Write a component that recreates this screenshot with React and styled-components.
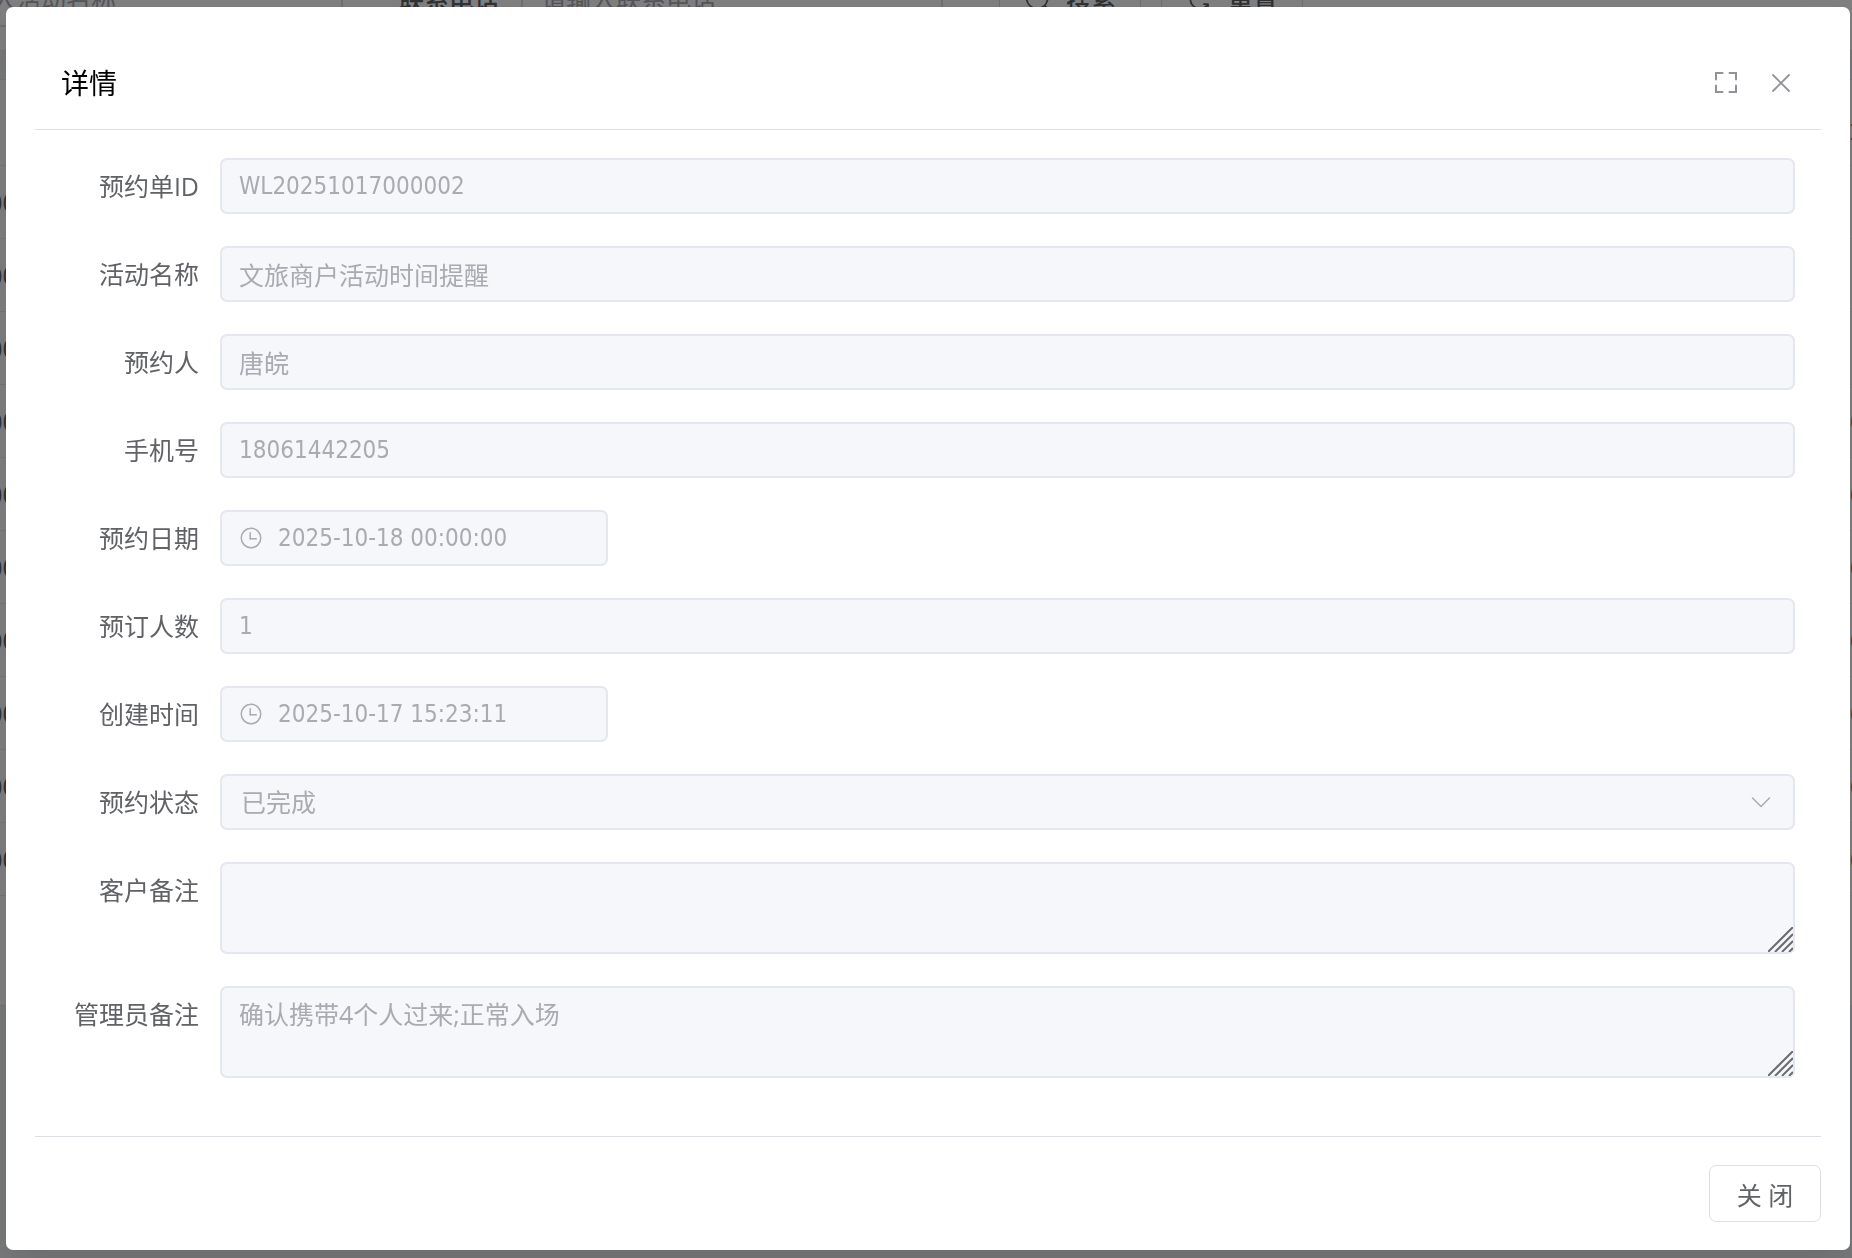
import React from "react";
import styled, { createGlobalStyle } from "styled-components";

const cjk = `"Noto Sans CJK SC", sans-serif`;

const GlobalStyle = createGlobalStyle`
    * {
        box-sizing: border-box;
    }
    body {
        margin: 0;
        font-family: "Open Sans", ${cjk};
        font-size: 25px;
        color: #606266;
        background: #f0f2f5;
    }
    button, input, select, textarea {
        font: inherit;
        margin: 0;
    }
`;

/* list page behind the dialog */

const Page = styled.div`
    height: 100vh;
    overflow: hidden;
`;

const Scrolled = styled.div`
    margin: -53px -160px 0 -103px;
    display: flex;
    flex-direction: column;
    gap: 28px;
`;

const Panel = styled.div`
    background: white;
    border: 1px solid #e4e7ed;
    padding: 23px;
`;

const SearchForm = styled(Panel)`
    display: flex;
    align-items: center;
    gap: 56px;
`;

const SearchItem = styled.label`
    display: flex;
    align-items: center;
    gap: 22px;
    font-weight: 500;
`;

const SearchInput = styled.input`
    width: 422px;
    height: 56px;
    padding: 0 18px;
    border: 2px solid #dcdfe6;
    border-radius: 6px;
    background: white;
    font-weight: 400;
    &::placeholder {
        color: #a8abb2;
        opacity: 1;
    }
`;

const Buttons = styled.div`
    display: flex;
    gap: 20px;
`;

const SearchButton = styled.button`
    width: 142px;
    height: 56px;
    display: flex;
    align-items: center;
    justify-content: center;
    gap: 14px;
    padding: 0;
    border: 1px solid #dcdfe6;
    border-radius: 6px;
    background: white;
    color: #606266;
    font-weight: 500;
`;

const ListPanel = styled(Panel)`
    padding: 12px 23px 109px;
`;

const List = styled.table`
    width: 100%;
    table-layout: fixed;
    border-collapse: collapse;
    color: #606266;
    th, td {
        height: 73px;
        padding: 0 0 0 10px;
        border-bottom: 1px solid #ebeef5;
        text-align: left;
        white-space: nowrap;
        line-height: 32px;
    }
    th:last-child, td:last-child {
        width: 138px;
        padding: 0;
    }
`;

/* dialog */

const Overlay = styled.div`
    position: fixed;
    inset: 0;
    overflow: auto;
    padding: 7px 2px 8px 6px;
    background: rgba(0, 0, 0, 0.5);
`;

const Dialog = styled.div`
    min-height: 100%;
    display: flex;
    flex-direction: column;
    padding: 28px 29px;
    border-radius: 7px;
    background: white;
    box-shadow: 0 21px 56px 7px rgba(0, 0, 0, 0.04), 0 14px 35px rgba(0, 0, 0, 0.08);
`;

const Header = styled.header`
    display: flex;
    align-items: center;
    justify-content: space-between;
    height: 95px;
    padding: 2px 26px 0;
    border-bottom: 1px solid #dcdfe6;
`;

const Title = styled.h1`
    margin: 0;
    font-size: 28px;
    font-weight: 400;
    line-height: 40px;
    color: black;
`;

const Tools = styled.div`
    display: flex;
    gap: 27px;
`;

const IconButton = styled.button`
    width: 28px;
    height: 28px;
    padding: 0;
    border: 0;
    background: none;
    color: #909399;
    svg {
        display: block;
    }
`;

const Form = styled.form`
    flex: 1;
    display: flex;
    flex-direction: column;
    gap: 32px;
    padding: 28px 26px 0 0;
`;

const Row = styled.div`
    display: flex;
    align-items: flex-start;
`;

const Label = styled.label`
    width: 185px;
    padding-right: 21px;
    text-align: right;
    line-height: 56px;
`;

const Control = styled.div`
    position: relative;
    flex: ${props => (props.$short ? "0 0 388px" : "1")};
    display: flex;
`;

const controlStyle = `
    width: 100%;
    border: 2px solid #e4e7ed;
    border-radius: 7px;
    background: #f5f7fa;
    color: #a8abb2;
    -webkit-text-fill-color: #a8abb2;
    opacity: 1;
    outline: none;
`;

const Input = styled.input`
    ${controlStyle}
    height: 56px;
    padding: 0 17px 0 ${props => (props.$icon ? "56px" : "17px")};
    ${props => props.$latin && `
        font-family: "DejaVu Sans Condensed", "Noto Sans", ${cjk};
        font-size: 24px;
    `}
`;

const Select = styled.select`
    ${controlStyle}
    appearance: none;
    height: 56px;
    padding: 0 19px;
`;

const Textarea = styled.textarea`
    ${controlStyle}
    display: block;
    height: 92px;
    padding: 8px 17px;
    line-height: 36px;
    resize: none;
`;

const Prefix = styled.span`
    position: absolute;
    top: 16px;
    left: 19px;
    color: #a8abb2;
    svg {
        display: block;
    }
`;

const Arrow = styled(Prefix)`
    left: auto;
    right: 22px;
`;

const Grip = styled(Prefix)`
    top: auto;
    left: auto;
    right: 2px;
    bottom: 2px;
    color: #6b6c70;
`;

const Footer = styled.footer`
    display: flex;
    justify-content: flex-end;
    padding-top: 28px;
    border-top: 1px solid #dcdfe6;
`;

const CloseButton = styled.button`
    width: 112px;
    height: 57px;
    padding: 0;
    border: 1px solid #dcdfe6;
    border-radius: 7px;
    background: white;
    color: #606266;
`;

const ClockIcon = () => (
    <svg width="24" height="24" viewBox="0 0 1024 1024" fill="currentColor">
        <path d="M512 896a384 384 0 1 0 0-768 384 384 0 0 0 0 768m0 64a448 448 0 1 1 0-896 448 448 0 0 1 0 896" />
        <path d="M480 256a32 32 0 0 1 32 32v256a32 32 0 0 1-64 0V288a32 32 0 0 1 32-32" />
        <path d="M480 512h256q32 0 32 32t-32 32H480q-32 0-32-32t32-32" />
    </svg>
);

const ArrowIcon = () => (
    <svg width="24" height="24" viewBox="0 0 24 24" fill="none" stroke="currentColor" strokeWidth="1.5" strokeLinecap="round" strokeLinejoin="round">
        <path d="M3.5 8l8.5 8.5L20.5 8" />
    </svg>
);

const GripIcon = () => (
    <svg width="25" height="25" viewBox="0 0 25 25" stroke="currentColor" strokeWidth="2">
        <path d="M0 25L25 0M7 25L25 7M14 25L25 14M21 25L25 21" />
    </svg>
);

const FullscreenIcon = () => (
    <svg width="28" height="28" viewBox="0 0 28 28" fill="none" stroke="currentColor" strokeWidth="2" strokeLinecap="round">
        <path d="M10.5 4H4v6.500M17.500 4H24v6.500M10.500 23H4v-6.500M17.500 23H24v-6.500" />
    </svg>
);

const CloseIcon = () => (
    <svg width="28" height="28" viewBox="0 0 28 28" fill="none" stroke="currentColor" strokeWidth="1.8" strokeLinecap="round">
        <path d="M6 6l16 16M22 6L6 22" />
    </svg>
);

const SearchIcon = () => (
    <svg width="28" height="28" viewBox="0 0 1024 1024" fill="currentColor">
        <path d="m795.904 750.72 124.992 124.928a32 32 0 0 1-45.248 45.248L750.656 795.904a416 416 0 1 1 45.248-45.184M480 832a352 352 0 1 0 0-704 352 352 0 0 0 0 704" />
    </svg>
);

const RefreshIcon = () => (
    <svg width="28" height="28" viewBox="0 0 1024 1024" fill="currentColor">
        <path d="M771.776 794.88A384 384 0 0 1 128 512h64a320 320 0 0 0 555.712 216.448H654.72a32 32 0 1 1 0-64h149.056a32 32 0 0 1 32 32v148.928a32 32 0 1 1-64 0v-50.56zM276.288 295.616h92.992a32 32 0 0 1 0 64H220.16a32 32 0 0 1-32-32V178.56a32 32 0 0 1 64 0v50.56A384 384 0 0 1 896.128 512h-64a320 320 0 0 0-555.776-216.384z" />
    </svg>
);

const fields = [
    { id: "orderId", label: "预约单ID", value: "WL20251017000002", latin: true },
    { id: "activity", label: "活动名称", value: "文旅商户活动时间提醒" },
    { id: "person", label: "预约人", value: "唐皖" },
    { id: "phone", label: "手机号", value: "18061442205", latin: true },
    { id: "date", label: "预约日期", value: "2025-10-18 00:00:00", type: "date", latin: true },
    { id: "count", label: "预订人数", value: "1", latin: true },
    { id: "created", label: "创建时间", value: "2025-10-17 15:23:11", type: "date", latin: true },
    { id: "status", label: "预约状态", value: "已完成", type: "select" },
    { id: "remark", label: "客户备注", value: "", type: "textarea" },
    { id: "adminRemark", label: "管理员备注", value: "确认携带4个人过来;正常入场", type: "textarea" }
];

const rows = ["", "", "", "0", "0", "0", "0", "0", "0", "0"];

const Field = ({ id, label, value, type, latin }) => (
    <Row>
        <Label htmlFor={id}>{label}</Label>
        <Control $short={type === "date"}>
            {type === "textarea" && (
                <>
                    <Textarea id={id} defaultValue={value} disabled />
                    <Grip><GripIcon /></Grip>
                </>
            )}
            {type === "select" && (
                <>
                    <Select id={id} defaultValue={value} disabled>
                        <option>{value}</option>
                    </Select>
                    <Arrow><ArrowIcon /></Arrow>
                </>
            )}
            {type !== "textarea" && type !== "select" && (
                <>
                    <Input id={id} defaultValue={value} $latin={latin} $icon={type === "date"} disabled />
                    {type === "date" && <Prefix><ClockIcon /></Prefix>}
                </>
            )}
        </Control>
    </Row>
);

const ListPage = () => (
    <Page>
        <Scrolled>
            <SearchForm>
                <SearchInput aria-label="活动名称" placeholder="请输入活动名称" />
                <SearchItem>
                    联系电话
                    <SearchInput placeholder="请输入联系电话" />
                </SearchItem>
                <Buttons>
                    <SearchButton type="button"><SearchIcon />搜索</SearchButton>
                    <SearchButton type="button"><RefreshIcon />重置</SearchButton>
                </Buttons>
            </SearchForm>
            <ListPanel>
                <List>
                    <thead>
                        <tr>
                            <th>单号</th>
                            <th>量</th>
                        </tr>
                    </thead>
                    <tbody>
                        {rows.map((count, index) => (
                            <tr key={index}>
                                <td>0000000000</td>
                                <td>{count}</td>
                            </tr>
                        ))}
                    </tbody>
                </List>
            </ListPanel>
        </Scrolled>
    </Page>
);

const App = () => (
    <>
        <GlobalStyle />
        <ListPage />
        <Overlay>
            <Dialog role="dialog" aria-labelledby="dialogTitle">
                <Header>
                    <Title id="dialogTitle">详情</Title>
                    <Tools>
                        <IconButton type="button" aria-label="全屏"><FullscreenIcon /></IconButton>
                        <IconButton type="button" aria-label="关闭"><CloseIcon /></IconButton>
                    </Tools>
                </Header>
                <Form>
                    {fields.map(field => <Field key={field.id} {...field} />)}
                </Form>
                <Footer>
                    <CloseButton type="button">关 闭</CloseButton>
                </Footer>
            </Dialog>
        </Overlay>
    </>
);

export default App;
